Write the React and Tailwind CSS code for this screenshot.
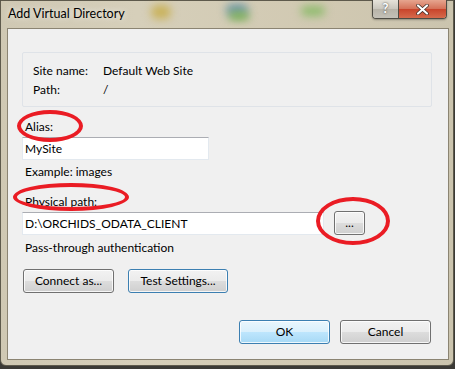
import React from "react";

const font = { fontFamily: 'Lato, "Noto Sans", "Liberation Sans", sans-serif' };

function WinButton({ children, className = "", variant = "normal" }) {
  const skin =
    variant === "default"
      ? "border-[#3c7fb1] bg-[linear-gradient(#eaf6fd_0%,#d9f0fc_50%,#bee6fd_50%,#a7d9f5_100%)]"
      : variant === "focus"
      ? "border-[#3c7fb1] bg-[linear-gradient(#f2f2f2_0%,#ebebeb_50%,#dddddd_50%,#cfcfcf_100%)]"
      : "border-[#707070] bg-[linear-gradient(#f2f2f2_0%,#ebebeb_50%,#dddddd_50%,#cfcfcf_100%)]";
  return (
    <div
      className={`flex items-center justify-center rounded-[3px] border text-[12px] text-black shadow-[inset_0_0_0_1px_rgba(255,255,255,0.8)] ${skin} ${className}`}
    >
      {children}
    </div>
  );
}

function TextBox({ value, className = "" }) {
  return (
    <div
      className={`flex h-[23px] items-center border border-[#e3e9ef] border-t-[#abadb3] bg-white pl-[2px] text-[12px] text-black ${className}`}
    >
      {value}
    </div>
  );
}

export default function App() {
  return (
    <div className="relative h-[369px] w-[455px] overflow-hidden bg-[#3b3a36]" style={font}>
      {/* window frame */}
      <div className="relative h-[366px] w-[454px] rounded-b-[6px] border border-[#5e5a4c] bg-[linear-gradient(90deg,#cfc8b3,#d6cfba_30%,#d1c9b2_70%,#cbc4ae)]">
        {/* title bar */}
        <div className="relative flex h-[27px] items-center pl-[7px]">
          <div className="absolute left-[150px] top-[4px] h-[14px] w-[20px] rounded-full bg-[#c9b25a] blur-[4px]" />
          <div className="absolute left-[225px] top-[3px] h-[12px] w-[22px] rounded-full bg-[#6f98a8] blur-[4px]" />
          <div className="absolute left-[228px] top-[11px] h-[8px] w-[20px] rounded-full bg-[#7cb24e] blur-[4px]" />
          <div className="absolute left-[300px] top-[5px] h-[10px] w-[24px] rounded-full bg-[#8ebb6c] blur-[4px]" />
          <span className="relative text-[12.5px] text-black [text-shadow:0_0_6px_rgba(255,255,255,0.9)]">
            Add Virtual Directory
          </span>
          <div className="absolute right-[6px] top-[-1px] flex h-[19px] overflow-hidden rounded-b-[4px] border border-t-0 border-[#4e4c44] shadow-[0_1px_2px_rgba(0,0,0,0.3)]">
            <div className="flex w-[26px] items-center justify-center border-r border-[#4e4c44] bg-[linear-gradient(#e6e3da,#c9c6bd_50%,#b7b3a8_50%,#c4c1b8)] text-[13px] font-bold text-white [text-shadow:0_0_2px_#333]">
              ?
            </div>
            <div className="flex w-[47px] items-center justify-center bg-[linear-gradient(#e6a58f,#d47057_50%,#c8432a_50%,#d66a4c)]">
              <svg width="13" height="11" viewBox="0 0 13 11">
                <path d="M2 1.5 L11 9.5 M11 1.5 L2 9.5" stroke="#3c2a24" strokeWidth="3.6" strokeLinecap="round" />
                <path d="M2 1.5 L11 9.5 M11 1.5 L2 9.5" stroke="#ffffff" strokeWidth="2.2" strokeLinecap="round" />
              </svg>
            </div>
          </div>
        </div>

        {/* client area */}
        <div className="ml-[6px] flex h-[332px] w-[442px] flex-col border border-[#8b8472] bg-[#f0f0f0] pl-[14px] pr-[16px] pt-[23px] text-[12px] text-black">
          <div className="flex flex-col rounded-[2px] border border-[#dfe3e8] bg-[#f0f0f0] pb-[7px] pl-[10px] pt-[8px]">
            <div className="flex h-[19px] items-center">
              <span className="w-[70px]">Site name:</span>
              <span>Default Web Site</span>
            </div>
            <div className="flex h-[19px] items-center">
              <span className="w-[70px]">Path:</span>
              <span>/</span>
            </div>
          </div>

          <div className="mt-[10px] flex h-[20px] items-center pl-[3px]">Alias:</div>
          <TextBox value="MySite" className="w-[187px]" />
          <div className="mt-[2px] flex h-[20px] items-center pl-[3px]">Example: images</div>

          <div className="mt-[10px] flex h-[20px] items-center pl-[3px]">Physical path:</div>
          <div className="flex items-start">
            <TextBox value="D:\ORCHIDS_ODATA_CLIENT" className="w-[302px]" />
            <WinButton className="ml-[10px] mt-[-1px] h-[24px] w-[31px] text-[11px]">...</WinButton>
          </div>
          <div className="mt-[3px] flex h-[20px] items-center pl-[3px]">Pass-through authentication</div>

          <div className="mt-[11px] flex gap-[14px] pl-[1px]">
            <WinButton className="h-[24px] w-[91px]">Connect as...</WinButton>
            <WinButton variant="focus" className="h-[24px] w-[100px]">
              Test Settings...
            </WinButton>
          </div>

          <div className="mt-[27px] flex justify-end gap-[10px] pr-[1px]">
            <WinButton variant="default" className="h-[24px] w-[91px]">
              OK
            </WinButton>
            <WinButton className="h-[24px] w-[91px]">Cancel</WinButton>
          </div>
        </div>
      </div>

      {/* red annotation ellipses */}
      <div className="pointer-events-none absolute left-[17px] top-[110px] h-[32px] w-[66px] rounded-[50%] border-[4px] border-[#ea1c24]" />
      <div className="pointer-events-none absolute left-[13px] top-[183px] h-[28px] w-[116px] rounded-[50%] border-[4px] border-[#ea1c24]" />
      <div className="pointer-events-none absolute left-[316px] top-[197px] h-[48px] w-[74px] rounded-[50%] border-[4px] border-[#ea1c24]" />
    </div>
  );
}
